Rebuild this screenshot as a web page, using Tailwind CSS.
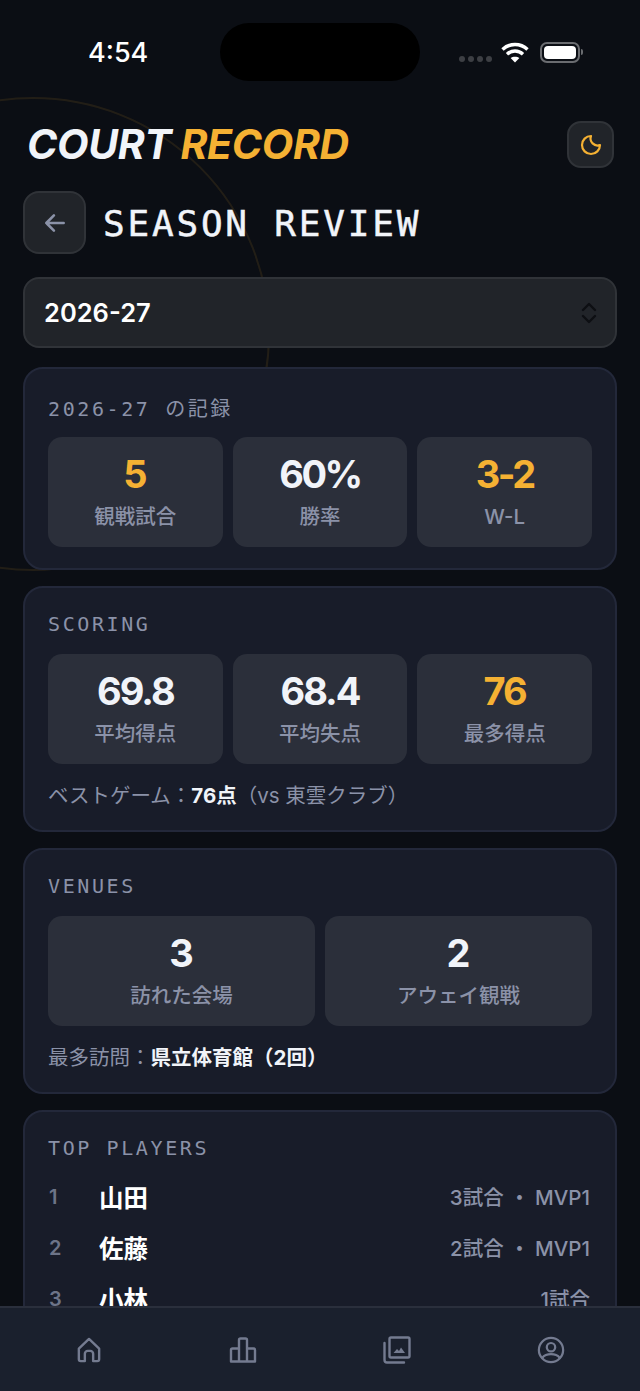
<!DOCTYPE html>
<html lang="ja">
<head>
    <meta charset="UTF-8">
    <meta name="viewport" content="width=device-width, initial-scale=1.0">
    <title>Court Record</title>
    <script src="https://cdn.jsdelivr.net/npm/@tailwindcss/browser@4"></script>
</head>
<body class="bg-[#0b0e14]">
    <div class="relative w-[640px] h-[1391px] overflow-hidden flex flex-col bg-[#0b0e14] font-['Inter','Noto_Sans_CJK_JP',sans-serif] text-[#f1f4f9]">
        <!-- background ring -->
        <div class="absolute left-[-204px] top-[97px] w-[474px] h-[474px] rounded-full border-2 border-[#f5b133]/10"></div>

        <!-- Status bar -->
        <div class="relative h-[121px] shrink-0">
            <div class="flex items-center justify-between h-[104px] pl-[88px] pr-[57px]">
                <span class="text-[27px] font-medium leading-none text-white">4:54</span>
                <div class="flex items-center">
                    <div class="flex gap-[3px] mt-[13px] mr-[9px]">
                        <span class="w-[6px] h-[6px] rounded-full bg-[#3d3f44]"></span>
                        <span class="w-[6px] h-[6px] rounded-full bg-[#3d3f44]"></span>
                        <span class="w-[6px] h-[6px] rounded-full bg-[#3d3f44]"></span>
                        <span class="w-[6px] h-[6px] rounded-full bg-[#3d3f44]"></span>
                    </div>
                    <svg width="28" height="21" viewBox="0 0 28 21" fill="none" stroke="white" stroke-width="3.4">
                        <path d="M1.5 7.5C8.5 .8 19.5 .8 26.5 7.5"/>
                        <path d="M6 12.2C10.6 8 17.4 8 22 12.2"/>
                        <path d="M14 20.5 L9.6 16 C12 14.2 16 14.2 18.4 16 Z" fill="white" stroke="none"/>
                    </svg>
                    <div class="ml-[11px] w-[40px] h-[21px] rounded-[7px] border-2 border-[#6a6c70] p-[2px]">
                        <div class="w-full h-full rounded-[4px] bg-white"></div>
                    </div>
                    <div class="ml-[1px] w-[2px] h-[6px] rounded-r bg-[#6a6c70]"></div>
                </div>
            </div>
            <div class="absolute left-[220px] top-[23px] w-[200px] h-[58px] rounded-[29px] bg-black"></div>
        </div>

        <!-- Header -->
        <header class="relative flex items-center justify-between h-[47px] shrink-0 pl-[27px] pr-[26px]">
            <h1 class="text-[41px] font-bold italic leading-none tracking-[-0.4px]">COURT <span class="text-[#f5b133]">RECORD</span></h1>
            <button class="w-[47px] h-[47px] flex items-center justify-center rounded-[14px] bg-[#212429] border-2 border-[#303338]">
                <svg width="24" height="24" viewBox="0 0 24 24" fill="none" stroke="#f5b133" stroke-width="2.200" stroke-linecap="round" stroke-linejoin="round"><path d="M12 3a9 9 0 1 0 9 9 7 7 0 0 1-9-9Z"/></svg>
            </button>
        </header>

        <main class="relative flex-1 min-h-0 overflow-hidden px-[23px] pt-[23px]">
            <div class="flex items-center gap-[17px]">
                <button class="w-[63px] h-[63px] flex items-center justify-center rounded-[16px] bg-[#212429] border-2 border-[#303338]">
                    <svg width="26" height="26" viewBox="0 0 24 24" fill="none" stroke="#8b92a8" stroke-width="2.400" stroke-linecap="round" stroke-linejoin="round"><path d="M20 12H4M11 5l-7 7 7 7"/></svg>
                </button>
                <h2 class="mt-[2px] font-['DejaVu_Sans_Mono',monospace] text-[36px] font-normal leading-none tracking-[2.8px] [-webkit-text-stroke:0.5px_#f1f4f9] text-[#f1f4f9]">SEASON REVIEW</h2>
            </div>

            <div class="mt-[23px] h-[71px] flex items-center justify-between pl-[19px] pr-[16px] rounded-[16px] bg-[#212429] border-2 border-[#303338]">
                <span class="mt-[2px] text-[25.500px] font-semibold text-white">2026-27</span>
                <svg width="20" height="24" viewBox="0 0 20 24" fill="none" stroke="#0d0f13" stroke-width="2.400" stroke-linecap="round" stroke-linejoin="round"><path d="M4 9l6-6 6 6M4 15l6 6 6-6"/></svg>
            </div>

            <!-- This season -->
            <section class="mt-[19px] h-[203px] px-[23px] rounded-[20px] bg-[#181c29] border-2 border-[#23283a]">
                <h3 class="h-[68px] pt-[24px] font-['DejaVu_Sans_Mono','Noto_Sans_CJK_JP',monospace] text-[20px] leading-[32px] tracking-[2.600px] text-[#8b92a8]">2026-27 の記録</h3>
                <div class="grid grid-cols-3 gap-[10px]">
                    <div class="h-[110px] flex flex-col items-center rounded-[14px] bg-[#2b2f3a] pt-[13px]">
                        <span class="text-[38px] font-bold leading-[48px] text-[#f5b133]">5</span>
                        <span class="mt-[3px] text-[20.500px] font-medium leading-[32px] text-[#8b92a8]">観戦試合</span>
                    </div>
                    <div class="h-[110px] flex flex-col items-center rounded-[14px] bg-[#2b2f3a] pt-[13px]">
                        <span class="text-[38px] font-bold leading-[48px] tracking-[-2.5px] text-[#f1f4f9]">60%</span>
                        <span class="mt-[3px] text-[20.500px] font-medium leading-[32px] text-[#8b92a8]">勝率</span>
                    </div>
                    <div class="h-[110px] flex flex-col items-center rounded-[14px] bg-[#2b2f3a] pt-[13px]">
                        <span class="text-[38px] font-bold leading-[48px] tracking-[-2.5px] text-[#f5b133]">3-2</span>
                        <span class="mt-[3px] text-[20.500px] font-medium leading-[32px] text-[#8b92a8]">W-L</span>
                    </div>
                </div>
            </section>

            <!-- Scoring -->
            <section class="mt-[16px] h-[246px] px-[23px] rounded-[20px] bg-[#181c29] border-2 border-[#23283a]">
                <h3 class="h-[66px] pt-[21px] font-['DejaVu_Sans_Mono',monospace] text-[20px] leading-[30px] tracking-[2.600px] text-[#8b92a8]">SCORING</h3>
                <div class="grid grid-cols-3 gap-[10px]">
                    <div class="h-[110px] flex flex-col items-center rounded-[14px] bg-[#2b2f3a] pt-[13px]">
                        <span class="text-[38px] font-bold leading-[48px] tracking-[-2px] text-[#f1f4f9]">69.8</span>
                        <span class="mt-[3px] text-[20.500px] font-medium leading-[32px] text-[#8b92a8]">平均得点</span>
                    </div>
                    <div class="h-[110px] flex flex-col items-center rounded-[14px] bg-[#2b2f3a] pt-[13px]">
                        <span class="text-[38px] font-bold leading-[48px] tracking-[-2px] text-[#f1f4f9]">68.4</span>
                        <span class="mt-[3px] text-[20.500px] font-medium leading-[32px] text-[#8b92a8]">平均失点</span>
                    </div>
                    <div class="h-[110px] flex flex-col items-center rounded-[14px] bg-[#2b2f3a] pt-[13px]">
                        <span class="text-[38px] font-bold leading-[48px] tracking-[-2px] text-[#f5b133]">76</span>
                        <span class="mt-[3px] text-[20.500px] font-medium leading-[32px] text-[#8b92a8]">最多得点</span>
                    </div>
                </div>
                <p class="mt-[16px] text-[20.500px] leading-[32px] text-[#8b92a8]">ベストゲーム：<span class="font-bold text-[#f1f4f9]">76点</span>（vs 東雲クラブ）</p>
            </section>

            <!-- Venues -->
            <section class="mt-[16px] h-[246px] px-[23px] rounded-[20px] bg-[#181c29] border-2 border-[#23283a]">
                <h3 class="h-[66px] pt-[21px] font-['DejaVu_Sans_Mono',monospace] text-[20px] leading-[30px] tracking-[2.600px] text-[#8b92a8]">VENUES</h3>
                <div class="grid grid-cols-2 gap-[10px]">
                    <div class="h-[110px] flex flex-col items-center rounded-[14px] bg-[#2b2f3a] pt-[13px]">
                        <span class="text-[38px] font-bold leading-[48px] text-[#f1f4f9]">3</span>
                        <span class="mt-[3px] text-[20.500px] font-medium leading-[32px] text-[#8b92a8]">訪れた会場</span>
                    </div>
                    <div class="h-[110px] flex flex-col items-center rounded-[14px] bg-[#2b2f3a] pt-[13px]">
                        <span class="text-[38px] font-bold leading-[48px] text-[#f1f4f9]">2</span>
                        <span class="mt-[3px] text-[20.500px] font-medium leading-[32px] text-[#8b92a8]">アウェイ観戦</span>
                    </div>
                </div>
                <p class="mt-[16px] text-[20.500px] leading-[32px] text-[#8b92a8]">最多訪問：<span class="font-bold text-[#f1f4f9]">県立体育館（2回）</span></p>
            </section>

            <!-- Top players -->
            <section class="mt-[16px] pl-[24px] pr-[25px] pb-[20px] rounded-[20px] bg-[#181c29] border-2 border-[#23283a]">
                <h3 class="-ml-[1px] h-[61px] pt-[21px] font-['DejaVu_Sans_Mono',monospace] text-[20px] leading-[30px] tracking-[2.600px] text-[#8b92a8]">TOP PLAYERS</h3>
                <div class="flex flex-col">
                    <div class="h-[51px] flex items-center">
                        <span class="w-[50px] text-[20px] font-semibold -mt-[3px] text-[#6d7488]">1</span>
                        <span class="text-[24.500px] font-bold text-white">山田</span>
                        <span class="ml-auto text-[20.500px] font-medium text-[#8b92a8]">3試合 ・ MVP1</span>
                    </div>
                    <div class="h-[51px] flex items-center">
                        <span class="w-[50px] text-[20px] font-semibold -mt-[3px] text-[#6d7488]">2</span>
                        <span class="text-[24.500px] font-bold text-white">佐藤</span>
                        <span class="ml-auto text-[20.500px] font-medium text-[#8b92a8]">2試合 ・ MVP1</span>
                    </div>
                    <div class="h-[51px] flex items-center">
                        <span class="w-[50px] text-[20px] font-semibold -mt-[3px] text-[#6d7488]">3</span>
                        <span class="text-[24.500px] font-bold text-white">小林</span>
                        <span class="ml-auto text-[20.500px] font-medium text-[#8b92a8]">1試合</span>
                    </div>
                </div>
            </section>
        </main>

        <!-- Bottom nav -->
        <nav class="relative h-[85px] shrink-0 grid grid-cols-4 px-[12px] bg-[#1a202d] border-t-2 border-[#2a2f3c]">
            <div class="flex items-center justify-center">
                <svg width="24" height="26" viewBox="0 0 26 28" fill="none" stroke="#747b90" stroke-width="2.600" stroke-linecap="round" stroke-linejoin="round"><path d="M2 12.5 13 2l11 10.5V24a2 2 0 0 1-2 2h-4.5v-8a3 3 0 0 0-3-3h-3a3 3 0 0 0-3 3v8H4a2 2 0 0 1-2-2Z"/></svg>
            </div>
            <div class="flex items-center justify-center">
                <svg width="28" height="26" viewBox="0 0 28 26" fill="none" stroke="#747b90" stroke-width="2.400" stroke-linecap="round" stroke-linejoin="round"><path d="M2 24.5V13a1.5 1.5 0 0 1 1.5-1.5H10V3a1.5 1.5 0 0 1 1.500-1.500h5A1.500 1.500 0 0 1 18 3v8.500h6.500A1.500 1.500 0 0 1 26 13v11.500ZM10 11.500v13M18 11.500v13"/></svg>
            </div>
            <div class="flex items-center justify-center">
                <svg width="28" height="28" viewBox="0 0 28 28" fill="none" stroke="#747b90" stroke-width="2.400" stroke-linecap="round" stroke-linejoin="round">
                    <rect x="6.500" y="1.500" width="20" height="20" rx="1.500"/>
                    <path d="M1.500 7v17a2.500 2.500 0 0 0 2.500 2.500h17"/>
                    <path d="M10.500 17l3.500-4 2 2 2-3.500 4 5.500Z" fill="#747b90" stroke="none"/>
                </svg>
            </div>
            <div class="flex items-center justify-center">
                <svg width="28" height="28" viewBox="0 0 30 30" fill="none" stroke="#747b90" stroke-width="2.400" stroke-linecap="round" stroke-linejoin="round">
                    <circle cx="15" cy="15" r="13"/>
                    <circle cx="15" cy="12" r="4.500"/>
                    <path d="M5.500 23.500C8 20.500 11 19.500 15 19.500s7 1 9.500 4"/>
                </svg>
            </div>
        </nav>
    </div>
</body>
</html>
